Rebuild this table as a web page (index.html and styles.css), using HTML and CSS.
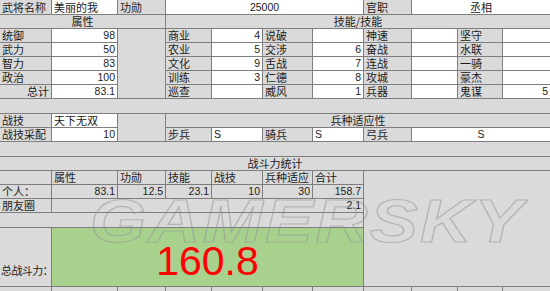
FILE: index.html
```html
<!DOCTYPE html>
<html lang="zh-CN">
<head>
<meta charset="utf-8">
<title>武将战斗力统计</title>
<link rel="stylesheet" href="styles.css">
</head>
<body>
<div class="sheet">
  <div class="grid">
    <!-- row 1 -->
    <div class="c">武将名称</div>
    <div class="c w">美丽的我</div>
    <div class="c">功勋</div>
    <div class="c w n m s4">25000</div>
    <div class="c">官职</div>
    <div class="c w m s3">丞相</div>
    <!-- row 2 -->
    <div class="c m s3">属性</div>
    <div class="c m s8">技能/技能</div>
    <!-- row 3 -->
    <div class="c">统御</div>
    <div class="c w n r">98</div>
    <div class="c h5"></div>
    <div class="c">商业</div>
    <div class="c w n r">4</div>
    <div class="c">说破</div>
    <div class="c w n r"></div>
    <div class="c">神速</div>
    <div class="c w n r"></div>
    <div class="c">坚守</div>
    <div class="c w n r"></div>
    <!-- row 4 -->
    <div class="c">武力</div>
    <div class="c w n r">50</div>
    <div class="c">农业</div>
    <div class="c w n r">5</div>
    <div class="c">交涉</div>
    <div class="c w n r">6</div>
    <div class="c">奋战</div>
    <div class="c w n r"></div>
    <div class="c">水联</div>
    <div class="c w n r"></div>
    <!-- row 5 -->
    <div class="c">智力</div>
    <div class="c w n r">83</div>
    <div class="c">文化</div>
    <div class="c w n r">9</div>
    <div class="c">舌战</div>
    <div class="c w n r">7</div>
    <div class="c">连战</div>
    <div class="c w n r"></div>
    <div class="c">一骑</div>
    <div class="c w n r"></div>
    <!-- row 6 -->
    <div class="c">政治</div>
    <div class="c w n r">100</div>
    <div class="c">训练</div>
    <div class="c w n r">3</div>
    <div class="c">仁德</div>
    <div class="c w n r">8</div>
    <div class="c">攻城</div>
    <div class="c w n r"></div>
    <div class="c">豪杰</div>
    <div class="c w n r"></div>
    <!-- row 7 -->
    <div class="c r">总计</div>
    <div class="c w n r">83.1</div>
    <div class="c">巡查</div>
    <div class="c w n r"></div>
    <div class="c">威风</div>
    <div class="c w n r">1</div>
    <div class="c">兵器</div>
    <div class="c w n r"></div>
    <div class="c">鬼谋</div>
    <div class="c w n r">5</div>
    <!-- row 8 -->
    <div class="c s11"></div>
    <!-- row 9 -->
    <div class="c">战技</div>
    <div class="c w">天下无双</div>
    <div class="c h2"></div>
    <div class="c m s8">兵种适应性</div>
    <!-- row 10 -->
    <div class="c">战技采配</div>
    <div class="c w n r">10</div>
    <div class="c">步兵</div>
    <div class="c w n">S</div>
    <div class="c">骑兵</div>
    <div class="c w n">S</div>
    <div class="c">弓兵</div>
    <div class="c w n m s3">S</div>
    <!-- row 11 -->
    <div class="c s11"></div>
    <!-- row 12 -->
    <div class="c m s11">战斗力统计</div>
    <!-- row 13 -->
    <div class="c"></div>
    <div class="c">属性</div>
    <div class="c">功勋</div>
    <div class="c">技能</div>
    <div class="c">战技</div>
    <div class="c">兵种适应</div>
    <div class="c">合计</div>
    <div class="c s4 h5"></div>
    <!-- row 14 -->
    <div class="c">个人：</div>
    <div class="c n r">83.1</div>
    <div class="c n r">12.5</div>
    <div class="c n r">23.1</div>
    <div class="c n r">10</div>
    <div class="c n r">30</div>
    <div class="c n r">158.7</div>
    <!-- row 15 -->
    <div class="c">朋友圈</div>
    <div class="c n r s6">2.1</div>
    <!-- row 16 -->
    <div class="c s7"></div>
    <!-- row 17 -->
    <div class="c total-label">总战斗力：</div>
    <div class="c total s6">160.8</div>
    <!-- row 18 -->
    <div class="c"></div><div class="c"></div><div class="c"></div><div class="c"></div>
    <div class="c"></div><div class="c"></div><div class="c"></div><div class="c"></div>
    <div class="c"></div><div class="c"></div><div class="c"></div>
  </div>
  <div class="watermark">GAMERSKY</div>
</div>
</body>
</html>
```

FILE: styles.css
```css
html, body {
  margin: 0;
  padding: 0;
  background: #dadada;
}

.sheet {
  position: relative;
  width: 550px;
  height: 291px;
  overflow: hidden;
  background: #dadada;
  font-family: "Noto Sans CJK SC", "Liberation Sans", sans-serif;
  color: #1c1c1c;
}

.grid {
  display: grid;
  grid-template-columns: 51px 65px 47px 45px 50px 49px 50px 47px 45px 44px 47px;
  grid-template-rows: 14px 13px 13px 13px 13px 13px 13px 14px 13px 13px 14px 13px 13px 13px 13px 14px 58px 13px;
  gap: 1px;
  background: #7e7e7e;
}

.c {
  background: #dadada;
  display: flex;
  align-items: center;
  padding: 0 2px;
  font-size: 11px;
  line-height: 13px;
  white-space: nowrap;
  min-width: 0;
}

.w { background: #ffffff; }
.r { justify-content: flex-end; }
.m { justify-content: center; }

.n {
  font-family: "Liberation Sans", "Noto Sans CJK SC", sans-serif;
  font-size: 10.5px;
}

.s3 { grid-column: span 3; }
.s4 { grid-column: span 4; }
.s6 { grid-column: span 6; }
.s7 { grid-column: span 7; }
.s8 { grid-column: span 8; }
.s11 { grid-column: span 11; }
.h2 { grid-row: span 2; }
.h5 { grid-row: span 5; }

.total-label {
  align-items: flex-end;
  padding: 0 0 9px 1px;
  letter-spacing: -0.6px;
}

.total {
  background: #a9d18e;
  color: #ff0000;
  justify-content: center;
  align-items: flex-end;
  font-family: "Liberation Sans", sans-serif;
  font-size: 41px;
  line-height: 41px;
  padding-bottom: 4px;
}

.watermark {
  position: absolute;
  left: 90px;
  top: 191px;
  font-family: "Liberation Sans", sans-serif;
  font-weight: bold;
  font-style: italic;
  font-size: 61px;
  line-height: 61px;
  letter-spacing: 2px;
  transform: scaleX(1.18);
  transform-origin: left top;
  color: transparent;
  -webkit-text-stroke: 1.2px rgba(150, 150, 150, 0.55);
  pointer-events: none;
  white-space: nowrap;
}
```
